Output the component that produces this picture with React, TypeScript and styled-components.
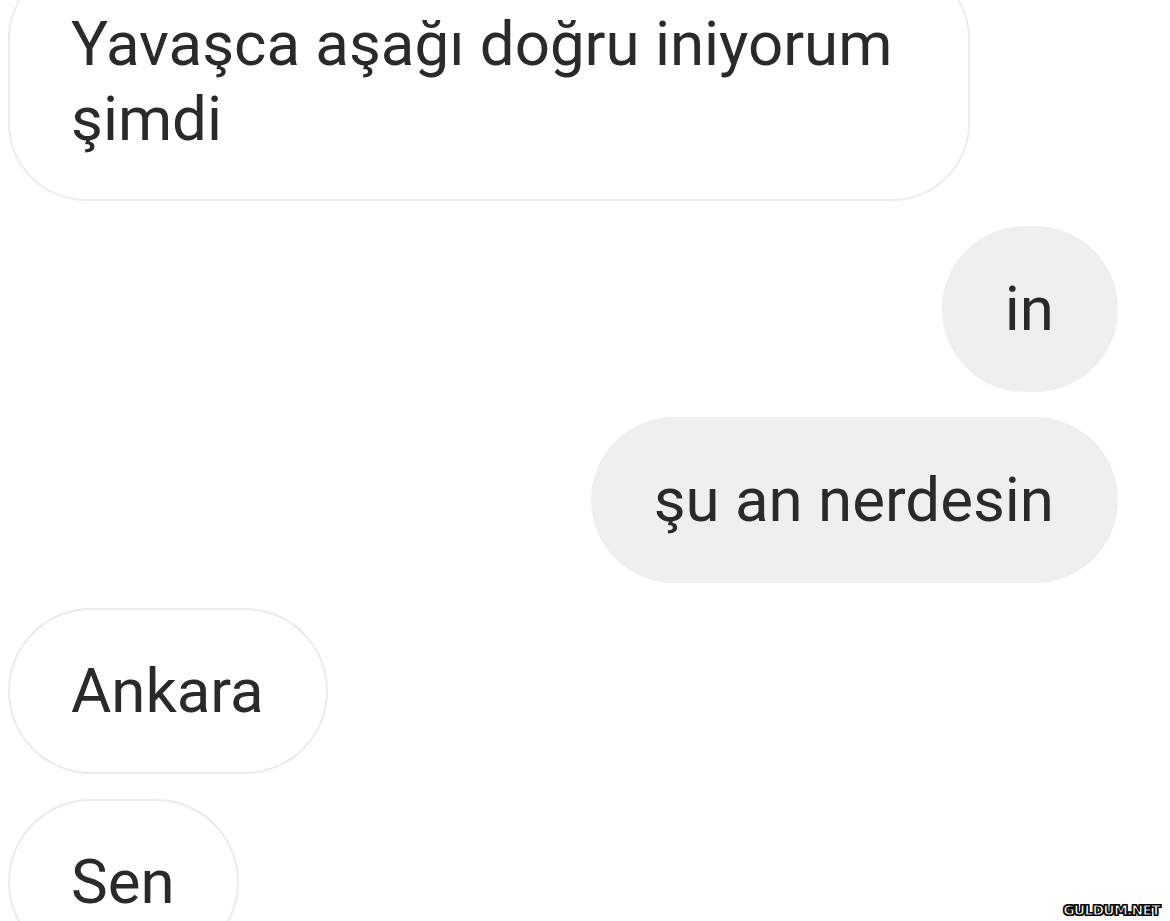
import React from "react";
import styled, { createGlobalStyle } from "styled-components";

const Global = createGlobalStyle`
  html, body { margin: 0; padding: 0; background: #ffffff; }
  body { width: 1170px; height: 921px; overflow: hidden; font-family: Roboto, "Noto Sans", sans-serif; }
`;

const Screen = styled.div`
  position: relative;
  width: 1170px;
  height: 921px;
  overflow: hidden;
  background: #fff;
`;

const Thread = styled.div`
  display: flex;
  flex-direction: column;
  gap: 25px;
  margin-top: -39px;
  padding: 0 52px 0 8px;
`;

const Row = styled.div<{ $mine?: boolean }>`
  display: flex;
  justify-content: ${(p) => (p.$mine ? "flex-end" : "flex-start")};
`;

const Bubble = styled.div<{ $mine?: boolean; $wide?: boolean }>`
  box-sizing: border-box;
  padding: 44px 62px 42px 61px;
  min-height: 166px;
  min-width: 166px;
  font-family: Roboto, "Noto Sans", sans-serif;
  font-size: 61.8px;
  line-height: 75px;
  color: #2a2a2a;
  border-radius: ${(p) => (p.$wide ? "78px" : "83px")};
  background: ${(p) => (p.$mine ? "#efefef" : "#ffffff")};
  border: 2px solid ${(p) => (p.$mine ? "#efefef" : "#ebebeb")};
  width: ${(p) => (p.$wide ? "962px" : "auto")};
  text-align: ${(p) => (p.$mine ? "right" : "left")};
`;

const Watermark = styled.div`
  position: absolute;
  right: 10px;
  bottom: 3px;
  font-family: "DejaVu Sans", sans-serif;
  font-weight: 700;
  font-size: 14px;
  letter-spacing: -0.8px;
  color: #ffffff;
  -webkit-text-stroke: 1px #000;
  text-shadow: 1px 1px 0 #000, -1px 1px 0 #000, 1px -1px 0 #000, -1px -1px 0 #000;
`;

export default function App() {
  return (
    <Screen>
      <Global />
      <Thread>
        <Row>
          <Bubble $wide>
            Yavaşca aşağı doğru iniyorum
            <br />
            şimdi
          </Bubble>
        </Row>
        <Row $mine>
          <Bubble $mine>in</Bubble>
        </Row>
        <Row $mine>
          <Bubble $mine>şu an nerdesin</Bubble>
        </Row>
        <Row>
          <Bubble>Ankara</Bubble>
        </Row>
        <Row>
          <Bubble>Sen</Bubble>
        </Row>
      </Thread>
      <Watermark>GULDUM.NET</Watermark>
    </Screen>
  );
}
